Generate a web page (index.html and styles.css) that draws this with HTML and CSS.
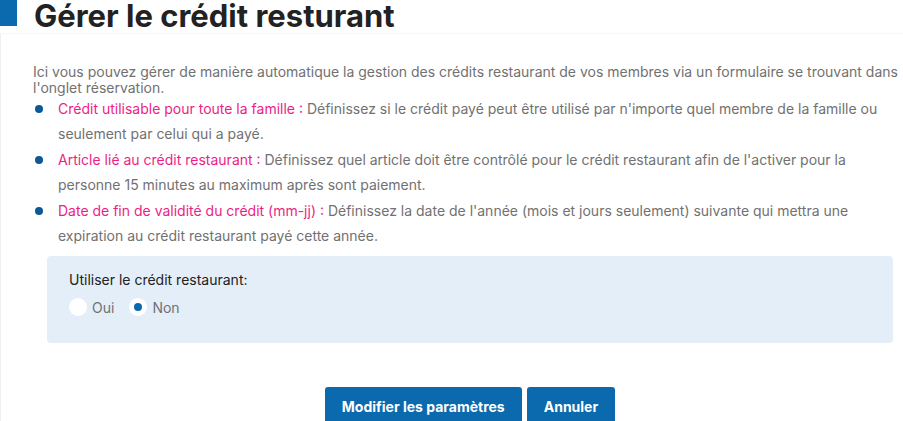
FILE: index.html
```html
<!DOCTYPE html>
<html lang="fr">
<head>
    <meta charset="UTF-8">
    <meta name="viewport" content="width=device-width, initial-scale=1.0">
    <title>Gérer le crédit restaurant</title>
    <link rel="stylesheet" href="styles.css">
</head>
<body>
    <h1 class="page-title">Gérer le crédit resturant</h1>

    <div class="card">
        <p class="intro">Ici vous pouvez gérer de manière automatique la gestion des crédits restaurant de vos membres via un formulaire se trouvant dans l'onglet réservation.</p>

        <ul class="help-list">
            <li><span class="help-term">Crédit utilisable pour toute la famille :</span> Définissez si le crédit payé peut être utilisé par n'importe quel membre de la famille ou seulement par celui qui a payé.</li>
            <li><span class="help-term">Article lié au crédit restaurant :</span> Définissez quel article doit être contrôlé pour le crédit restaurant afin de l'activer pour la personne 15 minutes au maximum après sont paiement.</li>
            <li><span class="help-term">Date de fin de validité du crédit (mm-jj) :</span> Définissez la date de l'année (mois et jours seulement) suivante qui mettra une expiration au crédit restaurant payé cette année.</li>
        </ul>

        <div class="settings-box">
            <div class="settings-label">Utiliser le crédit restaurant:</div>
            <div class="radio-group">
                <label class="radio">
                    <input type="radio" name="useCredit" value="1">
                    <span class="radio-mark"></span>
                    Oui
                </label>
                <label class="radio">
                    <input type="radio" name="useCredit" value="0" checked>
                    <span class="radio-mark"></span>
                    Non
                </label>
            </div>
        </div>

        <div class="actions">
            <button class="btn">Modifier les paramètres</button>
            <button class="btn">Annuler</button>
        </div>
    </div>
</body>
</html>
```

FILE: styles.css
```css
body {
    margin: 0;
    font-family: Inter, "Noto Sans", Arial, sans-serif;
    font-size: 14px;
    color: #717171;
    background-color: #fff;
}

/* Title */
.page-title {
    display: flex;
    align-items: flex-start;
    gap: 17px;
    margin: 0;
    height: 33px;
    font-size: 31px;
    line-height: 31px;
    font-weight: 700;
    color: #222;
}
.page-title::before {
    content: "";
    display: block;
    flex-shrink: 0;
    width: 17px;
    height: 26px;
    background-color: #0b6aad;
}

/* Card */
.card {
    border-left: 1px solid #f0f0f0;
    border-top: 1px solid #f7f7f7;
    padding: 30px 0 0 32px;
    min-height: 400px;
}
.intro {
    margin: 0;
    line-height: 16px;
}

/* Help list */
.help-list {
    list-style: none;
    margin: 0;
    padding: 0;
}
.help-list li {
    position: relative;
    padding-left: 25px;
    padding-right: 10px;
    line-height: 25.4px;
}
.help-list li::before {
    content: "";
    position: absolute;
    left: 2px;
    top: 9px;
    width: 8px;
    height: 8px;
    border-radius: 50%;
    background-color: #0b5897;
}
.help-term {
    color: #ec1e86;
}

/* Settings box */
.settings-box {
    margin: 8px 10px 0 14px;
    padding: 15px 22px 22px;
    height: 50px;
    border-radius: 4px;
    background-color: #e4eef8;
}
.settings-label {
    color: #222;
    line-height: 18px;
}
.radio-group {
    display: flex;
    gap: 15px;
    margin-top: 9px;
}
.radio {
    display: flex;
    align-items: center;
    gap: 5px;
    color: #717171;
    cursor: pointer;
}
.radio input {
    display: none;
}
.radio-mark {
    position: relative;
    width: 18px;
    height: 18px;
    border-radius: 50%;
    background-color: #fff;
}
.radio input:checked + .radio-mark::after {
    content: "";
    position: absolute;
    left: 5px;
    top: 5px;
    width: 8px;
    height: 8px;
    border-radius: 50%;
    background-color: #0b6aad;
}

/* Buttons */
.actions {
    display: flex;
    justify-content: center;
    gap: 5px;
    margin: 44px 10px 0 14px;
}
.btn {
    background-color: #0b6aad;
    color: #fff;
    border: none;
    border-radius: 3px;
    padding: 11px 17px 12px;
    font-family: inherit;
    font-size: 14px;
    font-weight: 700;
    cursor: pointer;
}
.btn:hover {
    background-color: #095b95;
}
```
